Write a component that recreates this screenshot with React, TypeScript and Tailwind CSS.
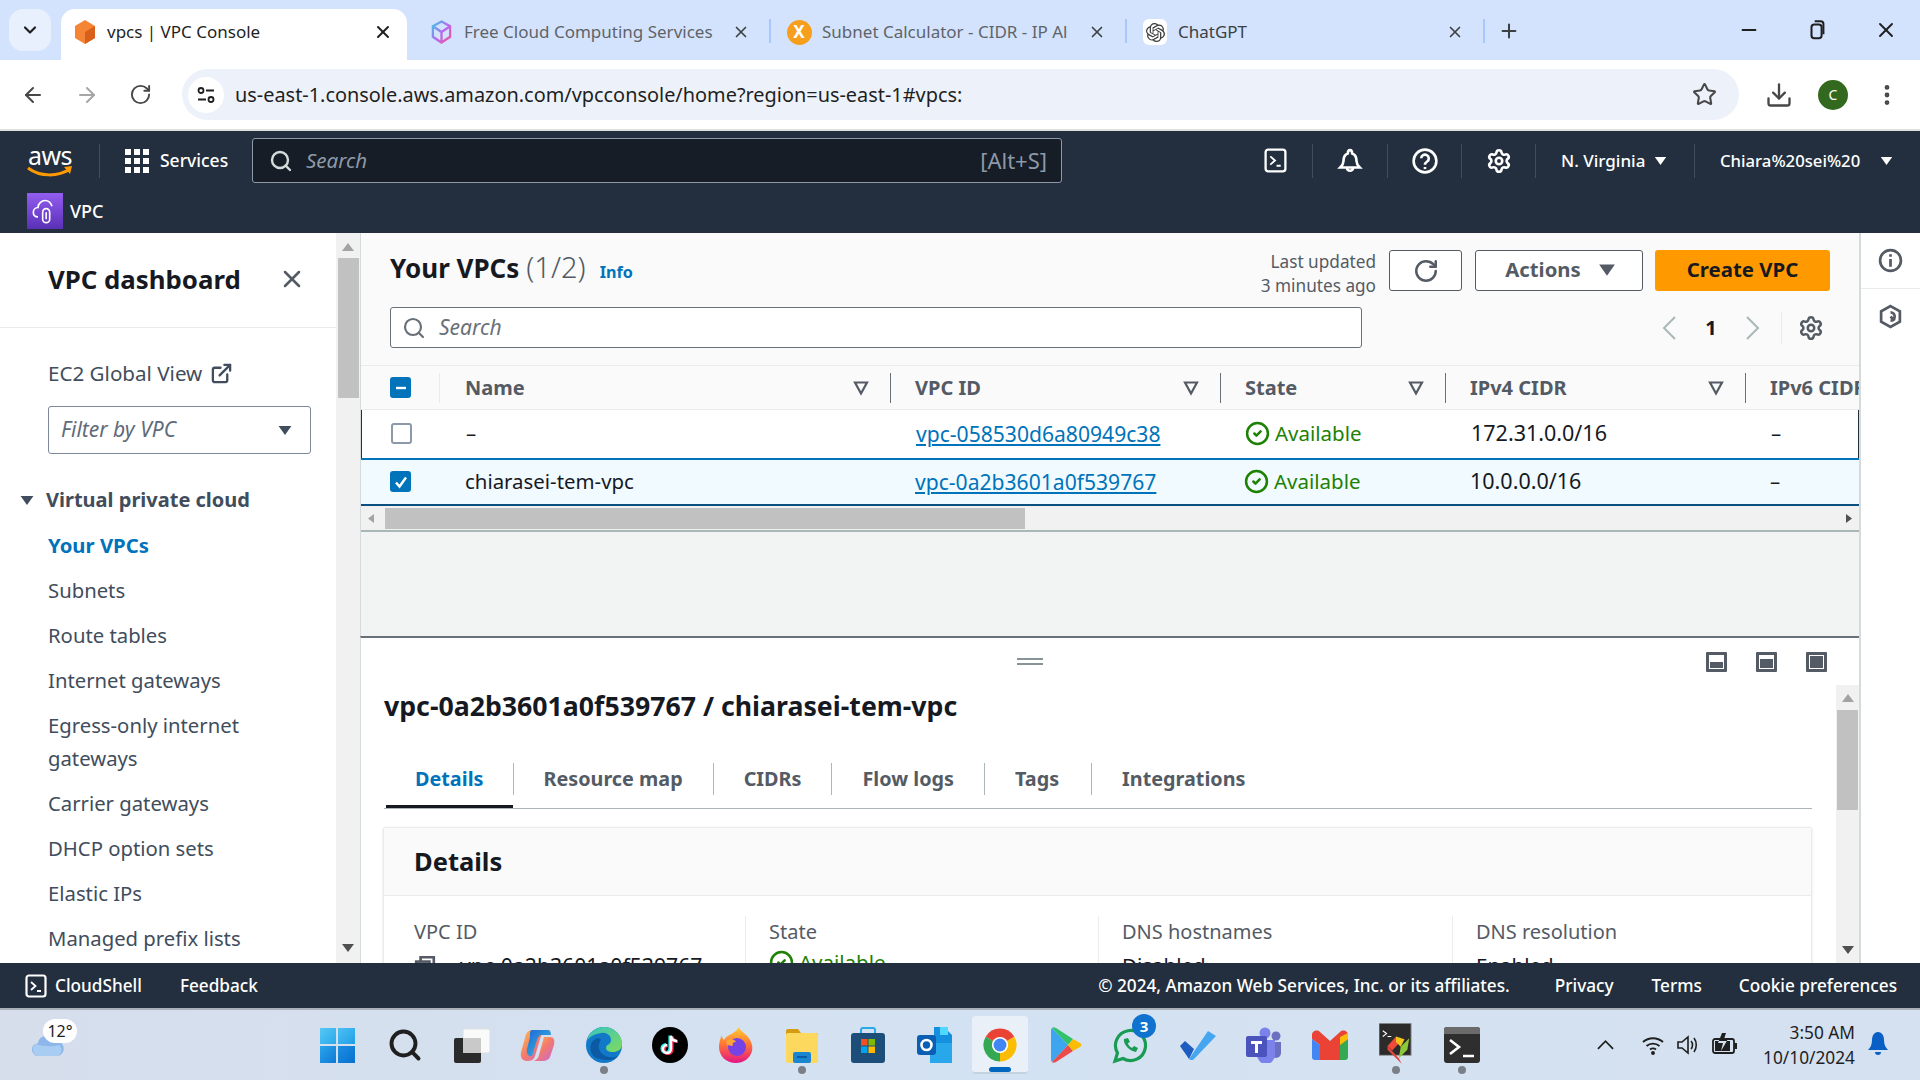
import {
  ArrowLeft,
  ArrowRight,
  ChevronDown,
  CircleCheck,
  Download,
  EllipsisVertical,
  ExternalLink,
  Minus,
  Plus,
  RotateCw,
  Search,
  Settings,
  Star,
  X,
} from 'lucide-react';
import { SiOpenai } from 'react-icons/si';

const nav = ['Subnets', 'Route tables', 'Internet gateways'];
const nav2 = ['Carrier gateways', 'DHCP option sets', 'Elastic IPs', 'Managed prefix lists'];

function Caret({ className }: { className?: string }) {
  return (
    <svg viewBox="0 0 16 12" className={className} fill="currentColor">
      <path d="M1 1h14L8 11z" />
    </svg>
  );
}

function FilterIcon() {
  return (
    <svg viewBox="0 0 16 16" className="w-4 h-4 text-[#545b64]" fill="none" stroke="currentColor" strokeWidth="2.2">
      <path d="M2 2.5h12L8 13.5z" />
    </svg>
  );
}

function BoxPrompt({ className }: { className?: string }) {
  return (
    <svg viewBox="0 0 24 24" className={className} fill="none" stroke="currentColor" strokeWidth="2.2">
      <rect x="2.5" y="1.5" width="19" height="21" rx="2.5" />
      <path d="M7 8l4.5 4L7 16M13 17h4" strokeWidth="1.8" />
    </svg>
  );
}

function Tab({ icon, title, width, fade }: { icon: React.ReactNode; title: string; width: string; fade?: boolean }) {
  return (
    <div className={`flex items-center h-[46px] shrink-0 ${width}`}>
      <span className="w-[26px] h-[26px] flex items-center justify-center shrink-0">{icon}</span>
      <span
        className={`ml-[10px] flex-1 overflow-hidden whitespace-nowrap text-[17px] ${fade ? 'text-[#5f6368]' : 'text-[#3c4043]'}`}
      >
        {title}
      </span>
      <X className="w-[18px] h-[18px] text-[#3c4043] mx-[5px] shrink-0" strokeWidth={2.2} />
    </div>
  );
}

function TabBar() {
  return (
    <div className="h-[60px] bg-[#d3e3fd] flex items-start pt-[9px] shrink-0">
      <div className="ml-[9px] w-[42px] h-[42px] rounded-[14px] bg-[#e8f0fe] flex items-center justify-center">
        <ChevronDown className="w-5 h-5 text-[#1f1f1f]" strokeWidth={2.6} />
      </div>
      <div className="ml-[10px] w-[346px] h-[51px] bg-white rounded-t-[14px] flex items-center pl-[12px] pr-[14px] pb-[5px]">
        <svg viewBox="0 0 24 26" className="w-[24px] h-[26px] shrink-0">
          <path d="M12 1l10 6v12l-10 6-10-6V7z" fill="#f58534" />
          <path d="M12 13l10-6v12l-10 6z" fill="#d9601a" />
        </svg>
        <span className="ml-[10px] flex-1 text-[17px] text-[#1f1f1f] whitespace-nowrap">vpcs | VPC Console</span>
        <X className="w-[20px] h-[20px] text-[#1f1f1f]" strokeWidth={2.4} />
      </div>
      <div className="ml-[21px] w-[327px]">
        <Tab
          width="w-[327px]"
          fade
          title="Free Cloud Computing Services"
          icon={
            <svg viewBox="0 0 24 26" className="w-[23px] h-[26px]" fill="none" strokeWidth="2.4">
              <defs>
                <linearGradient id="fc" x1="0" y1="0" x2="1" y2="1">
                  <stop offset="0" stopColor="#3fc7e8" />
                  <stop offset="0.5" stopColor="#b36cf0" />
                  <stop offset="1" stopColor="#f2559c" />
                </linearGradient>
              </defs>
              <path d="M12 2l9 5v11l-9 6-9-6V7zM3 7l9 6 9-6M12 13v11" stroke="url(#fc)" />
            </svg>
          }
        />
      </div>
      <div className="w-[2px] h-[24px] mt-[10px] ml-[14px] bg-[#a8c7fa] shrink-0" />
      <div className="ml-[15px] w-[325px]">
        <Tab
          width="w-[325px]"
          fade
          title="Subnet Calculator - CIDR - IP Al"
          icon={
            <span className="w-[25px] h-[25px] rounded-full bg-[#f79f1c] flex items-center justify-center text-white text-[17px] font-bold">
              X
            </span>
          }
        />
      </div>
      <div className="w-[2px] h-[24px] mt-[10px] ml-[14px] bg-[#a8c7fa] shrink-0" />
      <div className="ml-[15px] w-[327px]">
        <Tab
          width="w-[327px]"
          title="ChatGPT"
          icon={
            <span className="w-[24px] h-[26px] rounded-[6px] bg-white flex items-center justify-center">
              <SiOpenai className="w-[19px] h-[19px] text-[#3c3c3c]" />
            </span>
          }
        />
      </div>
      <div className="w-[2px] h-[24px] mt-[10px] ml-[14px] bg-[#a8c7fa] shrink-0" />
      <Plus className="ml-[13px] mt-[10px] w-[22px] h-[24px] text-[#3c4043]" strokeWidth={2.2} />
      <div className="ml-auto flex items-center h-[42px] pr-[22px] gap-[46px] text-[#1f1f1f]">
        <Minus className="w-[22px] h-[22px]" strokeWidth={2.2} />
        <svg viewBox="0 0 22 24" className="w-[22px] h-[22px]" fill="none" stroke="currentColor" strokeWidth="2.2">
          <rect x="5" y="6" width="11" height="15" rx="3" />
          <path d="M8.5 2.5H15a3 3 0 0 1 3 3v11" />
        </svg>
        <X className="w-[24px] h-[26px]" strokeWidth={1.9} />
      </div>
    </div>
  );
}

function AddressBar() {
  return (
    <div className="h-[71px] bg-white border-b-2 border-[#dfdfdf] flex items-center shrink-0">
      <div className="w-[182px] flex items-center pl-[21px] gap-[30px] text-[#474747]">
        <ArrowLeft className="w-[24px] h-[24px]" strokeWidth={2} />
        <ArrowRight className="w-[24px] h-[24px] text-[#a6a6a6]" strokeWidth={2} />
        <RotateCw className="w-[23px] h-[23px]" strokeWidth={2} />
      </div>
      <div className="w-[1557px] h-[51px] rounded-full bg-[#edf2fa] flex items-center pl-[6px] pr-[22px]">
        <span className="w-[36px] h-[36px] rounded-full bg-white flex items-center justify-center">
          <svg viewBox="0 0 20 20" className="w-[20px] h-[20px] text-[#1f1f1f]" fill="none" stroke="currentColor" strokeWidth="1.8">
            <circle cx="5" cy="5.500" r="2.500" />
            <path d="M10 5.500h8M2 14.500h8" />
            <circle cx="15" cy="14.500" r="2.500" />
          </svg>
        </span>
        <span className="ml-[11px] flex-1 text-[19.900px] text-[#1f1f1f] whitespace-nowrap">
          us-east-1.console.aws.amazon.com/vpcconsole/home?region=us-east-1#vpcs:
        </span>
        <Star className="w-[25px] h-[25px] text-[#474747]" strokeWidth={2} />
      </div>
      <Download className="ml-[26px] w-[28px] h-[28px] text-[#474747]" strokeWidth={2} />
      <span className="ml-[25px] w-[30px] h-[30px] rounded-full bg-[#33691e] text-white text-[14px] flex items-center justify-center">
        C
      </span>
      <EllipsisVertical className="ml-[26px] w-[26px] h-[26px] text-[#474747]" strokeWidth={2.4} />
    </div>
  );
}

function NavSep({ className }: { className: string }) {
  return <div className={`w-px h-[34px] bg-[#414d5c] shrink-0 ${className}`} />;
}

function AwsNav() {
  return (
    <div className="h-[102px] bg-[#232f3e] text-white shrink-0">
      <div className="h-[59px] flex items-center">
        <div className="ml-[27px] w-[46px] h-[36px] flex flex-col items-center">
          <span className="text-[25px] leading-[24px] tracking-tight">aws</span>
          <svg viewBox="0 0 46 12" className="w-[46px] h-[12px] -mt-[1px]" fill="none">
            <path d="M1 2c12 9 30 9 42 1" stroke="#ff9900" strokeWidth="3" />
            <path d="M37 1l8-1-2 8z" fill="#ff9900" />
          </svg>
        </div>
        <NavSep className="ml-[26px]" />
        <div className="ml-[25px] grid grid-cols-3 gap-[3px] w-[24px] shrink-0">
          {Array.from({ length: 9 }).map((_, i) => (
            <span key={i} className="w-[6px] h-[6px] bg-white" />
          ))}
        </div>
        <span className="ml-[11px] w-[92px] text-[17.500px] font-medium">Services</span>
        <div className="w-[810px] h-[45px] bg-[#161d26] border border-[#8d99a8] rounded-[3px] flex items-center pl-[16px] pr-[14px]">
          <Search className="w-[24px] h-[24px] text-[#d5dbdb]" strokeWidth={2.4} />
          <span className="ml-[13px] text-[20.500px] italic text-[#8d99a8] flex-1">Search</span>
          <span className="text-[22px] text-[#8d99a8]">[Alt+S]</span>
        </div>
        <BoxPrompt className="ml-[201px] w-[25px] h-[25px] shrink-0" />
        <NavSep className="ml-[24px]" />
        <svg
          viewBox="0 0 24 24"
          className="ml-[24px] w-[26px] h-[26px] shrink-0"
          fill="none"
          stroke="currentColor"
          strokeWidth="2.4"
        >
          <path d="M12 2c-1 0-2 1-2 3-3 1-4 4-4 7 0 3-2 5-3 6h18c-1-1-3-3-3-6 0-3-1-6-4-7 0-2-1-3-2-3zM9 18a3 3 0 0 0 6 0" />
        </svg>
        <NavSep className="ml-[24px]" />
        <svg
          viewBox="0 0 24 24"
          className="ml-[24px] w-[26px] h-[26px] shrink-0"
          fill="none"
          stroke="currentColor"
          strokeWidth="2.4"
        >
          <circle cx="12" cy="12" r="10.5" />
          <path d="M8.5 9.5a3.5 3.5 0 1 1 5.5 3c-1.3.9-2 1.4-2 3" />
          <path d="M12 17.5v2" />
        </svg>
        <NavSep className="ml-[23px]" />
        <Settings className="ml-[24px] w-[26px] h-[26px] shrink-0" strokeWidth={2.4} />
        <NavSep className="ml-[23px]" />
        <span className="ml-[25px] text-[17px] font-medium w-[90px] whitespace-nowrap">N. Virginia</span>
        <Caret className="ml-[3px] w-[13px] h-[10px]" />
        <NavSep className="ml-[27px]" />
        <span className="ml-[25px] text-[16.700px] font-medium w-[152px] whitespace-nowrap">Chiara%20sei%20</span>
        <Caret className="ml-[8px] w-[13px] h-[10px]" />
      </div>
      <div className="h-[43px] flex items-start">
        <div className="ml-[27px] mt-[3px] w-[36px] h-[36px] bg-gradient-to-b from-[#945df2] to-[#5a30b5] flex items-center justify-center">
          <svg viewBox="0 0 24 24" className="w-[28px] h-[28px]" fill="none" stroke="white" strokeWidth="1.4">
            <path d="M6 17c-3 0-4-2-4-4s1.500-4 4-4c0-3 3-6 6-6 3 0 5 2 6 5" />
            <rect x="10" y="10" width="6" height="12" rx="3" />
            <path d="M13 13v6" />
          </svg>
        </div>
        <span className="ml-[7px] mt-[8px] text-[18px] font-medium">VPC</span>
      </div>
    </div>
  );
}

function ScrollArrow({ up }: { up?: boolean }) {
  return (
    <svg viewBox="0 0 12 8" className={`w-[12px] h-[8px] ${up ? 'text-[#a3a3a3]' : 'text-[#505050]'}`} fill="currentColor">
      <path d={up ? 'M6 0l6 8H0z' : 'M6 8L0 0h12z'} />
    </svg>
  );
}

function Sidebar() {
  return (
    <div className="w-[360px] flex shrink-0 h-full">
      <div className="w-[336px] bg-white overflow-hidden text-[#414d5c] text-[20.300px]">
        <div className="h-[95px] border-b border-[#e9ebed] flex items-center pl-[48px] pr-[30px] pb-[2px]">
          <span className="flex-1 text-[25.800px] font-bold text-[#16191f] whitespace-nowrap">VPC dashboard</span>
          <X className="w-[28px] h-[28px] text-[#545b64]" strokeWidth={2.2} />
        </div>
        <div className="pl-[48px] mt-[31px] flex items-center h-[28px] text-[20.600px]">
          <span>EC2 Global View</span>
          <ExternalLink className="ml-[8px] w-[23px] h-[23px] text-[#414d5c]" strokeWidth={2.4} />
        </div>
        <div className="ml-[48px] mt-[19px] w-[263px] h-[48px] border border-[#7d8998] rounded-[3px] flex items-center pl-[12px] pr-[17px] italic text-[21px] text-[#5f6b7a]">
          <span className="flex-1">Filter by VPC</span>
          <Caret className="w-[16px] h-[11px] text-[#414d5c]" />
        </div>
        <div className="mt-[31px] pl-[19px] flex items-center h-[30px] font-bold text-[20px]">
          <Caret className="w-[16px] h-[11px]" />
          <span className="ml-[11px] whitespace-nowrap">Virtual private cloud</span>
        </div>
        <div className="pl-[48px]">
          <div className="h-[45px] mt-[8px] flex items-center font-bold text-[#0073bb]">Your VPCs</div>
          {nav.map((item) => (
            <div key={item} className="h-[45px] flex items-center whitespace-nowrap">
              {item}
            </div>
          ))}
          <div className="leading-[33px] py-[6px] w-[250px]">Egress-only internet gateways</div>
          {nav2.map((item) => (
            <div key={item} className="h-[45px] flex items-center whitespace-nowrap">
              {item}
            </div>
          ))}
        </div>
      </div>
      <div className="w-[24px] bg-[#f1f1f1] flex flex-col items-center pt-[10px] pb-[11px]">
        <ScrollArrow up />
        <div className="w-[21px] h-[140px] mt-[7px] bg-[#c1c1c1]" />
        <div className="flex-1" />
        <ScrollArrow />
      </div>
    </div>
  );
}

function Checkbox({ state }: { state: 'none' | 'some' | 'all' }) {
  if (state === 'none') {
    return <span className="block w-[21px] h-[21px] rounded-[3px] border-2 border-[#8d99a8] bg-white" />;
  }
  return (
    <span className="w-[21px] h-[21px] rounded-[3px] bg-[#0073bb] flex items-center justify-center">
      <svg viewBox="0 0 16 16" className="w-[16px] h-[16px]" fill="none" stroke="white" strokeWidth="2.4">
        <path d={state === 'some' ? 'M3 8h10' : 'M3 8.500l3.500 4L13 3.500'} />
      </svg>
    </span>
  );
}

const gridCols = 'grid grid-cols-[79px_450px_330px_225px_300px_200px]';

function HeadCell({ label, sep = true }: { label: string; sep?: boolean }) {
  return (
    <div className="flex items-center h-[30px] pl-[24px] pr-[21px] border-l border-[#687078]">
      <span className="flex-1 text-[20px] font-bold text-[#545b64] whitespace-nowrap">{label}</span>
      {sep && <FilterIcon />}
    </div>
  );
}

function Available({ small }: { small?: boolean }) {
  return (
    <div className={`flex items-center text-[#1d8102] text-[20.500px] ${small ? 'h-[24px]' : ''}`}>
      <CircleCheck className="w-[25px] h-[25px] mr-[5px]" strokeWidth={2.4} />
      Available
    </div>
  );
}

function VpcRow({
  name,
  id,
  cidr,
  selected,
}: {
  name: string;
  id: string;
  cidr: string;
  selected?: boolean;
}) {
  return (
    <div
      className={`${gridCols} items-center text-[20.400px] text-[#16191f] pb-[1px] ${
        selected
          ? 'h-[48px] bg-[#f1faff] border-y-2 border-[#0073bb] border-b-[#0b4f80]'
          : 'h-[48px] bg-white border-x border-[#232f3e]'
      }`}
    >
      <div className="pl-[29px]">
        <Checkbox state={selected ? 'all' : 'none'} />
      </div>
      <div className="pl-[25px] whitespace-nowrap">{name}</div>
      <div className="pl-[25px] text-[21.100px] text-[#0073bb] underline underline-offset-2 whitespace-nowrap">{id}</div>
      <div className="pl-[24px]">
        <Available />
      </div>
      <div className="pl-[25px] text-[21.500px]">{cidr}</div>
      <div className="pl-[25px]">–</div>
    </div>
  );
}

function VpcList() {
  return (
    <div className="h-[403px] bg-[#f2f3f3] shrink-0 border-l border-[#d5dbdb] overflow-hidden">
      <div className="h-[132px] bg-[#fafafa] px-[29px] pt-[17px]">
        <div className="flex items-start h-[41px]">
          <div className="flex items-baseline -mt-[5px]">
            <span className="text-[26px] font-bold text-[#16191f]">Your VPCs</span>
            <span className="ml-[7px] text-[29px] font-light text-[#545b64]">(1/2)</span>
            <span className="ml-[14px] text-[16.200px] font-bold text-[#0073bb]">Info</span>
          </div>
          <div className="ml-auto text-right text-[#545b64] text-[17.200px] leading-[24px]">
            <div>Last updated</div>
            <div>3 minutes ago</div>
          </div>
          <div className="ml-[13px] w-[73px] h-[41px] bg-white border border-[#545b64] rounded-[3px] flex items-center justify-center">
            <RotateCw className="w-[26px] h-[26px] text-[#545b64]" strokeWidth={2.3} />
          </div>
          <div className="ml-[13px] w-[168px] h-[41px] bg-white border border-[#545b64] rounded-[3px] flex items-center justify-center gap-[17px] pl-[3px] pb-[2px] text-[#545b64] text-[20.300px] font-bold">
            Actions
            <Caret className="w-[18px] h-[14px]" />
          </div>
          <div className="ml-[12px] w-[175px] h-[41px] bg-[#ff9900] rounded-[3px] flex items-center justify-center pb-[2px] text-[#16191f] text-[20.400px] font-bold">
            Create VPC
          </div>
        </div>
        <div className="mt-[16px] flex items-center h-[41px]">
          <div className="w-[972px] h-[41px] bg-white border border-[#687078] rounded-[3px] flex items-center pl-[11px] italic text-[#687078] text-[21px] shrink-0">
            <Search className="w-[24px] h-[24px] mr-[13px]" strokeWidth={2.2} />
            Search
          </div>
          <svg viewBox="0 0 14 24" className="ml-[300px] w-[14px] h-[24px] text-[#aab7b8] shrink-0" fill="none" stroke="currentColor" strokeWidth="2">
            <path d="M13 1L2 12l11 11" />
          </svg>
          <span className="ml-[28px] w-[14px] text-[20px] font-bold text-[#16191f] text-center">1</span>
          <svg viewBox="0 0 14 24" className="ml-[28px] w-[14px] h-[24px] text-[#aab7b8] shrink-0" fill="none" stroke="currentColor" strokeWidth="2">
            <path d="M1 1l11 11L1 23" />
          </svg>
          <div className="ml-[21px] w-px h-[32px] bg-[#eaeded]" />
          <Settings className="ml-[16px] w-[26px] h-[26px] text-[#545b64]" strokeWidth={2.3} />
        </div>
      </div>
      <div className={`${gridCols} items-center h-[45px] bg-[#fafafa] border-y border-[#e9ebed]`}>
        <div className="flex items-center h-[30px] pl-[29px]">
          <Checkbox state="some" />
          <div className="ml-[28px] w-px h-[30px] bg-[#e9ebed]" />
        </div>
        <div className="flex items-center h-[30px] pl-[25px] pr-[21px]">
          <span className="flex-1 text-[20px] font-bold text-[#545b64]">Name</span>
          <FilterIcon />
        </div>
        <HeadCell label="VPC ID" />
        <HeadCell label="State" />
        <HeadCell label="IPv4 CIDR" />
        <HeadCell label="IPv6 CIDR" sep={false} />
      </div>
      <VpcRow name="–" id="vpc-058530d6a80949c38" cidr="172.31.0.0/16" />
      <VpcRow name="chiarasei-tem-vpc" id="vpc-0a2b3601a0f539767" cidr="10.0.0.0/16" selected />
      <div className="h-[26px] bg-[#f1f1f1] border-b-2 border-[#aab7b8] flex items-center pl-[7px] pr-[7px]">
        <svg viewBox="0 0 8 12" className="w-[6px] h-[11px] text-[#a3a3a3]" fill="currentColor">
          <path d="M0 6l8-6v12z" />
        </svg>
        <div className="ml-[11px] w-[640px] h-[21px] bg-[#c1c1c1]" />
        <svg viewBox="0 0 8 12" className="ml-auto w-[6px] h-[11px] text-[#505050]" fill="currentColor">
          <path d="M8 6L0 0v12z" />
        </svg>
      </div>
    </div>
  );
}

function PanelIcon({ fill }: { fill: string }) {
  return (
    <span className="w-[21px] h-[20px] border-[3px] border-[#545b64] rounded-[1px] flex items-end p-[1px]">
      <span className={`block w-full bg-[#545b64] ${fill}`} />
    </span>
  );
}

const tabs = ['Resource map', 'CIDRs', 'Flow logs', 'Tags', 'Integrations'];

function TabLabel({ label, active }: { label: string; active?: boolean }) {
  return (
    <div className={`h-[45px] ${active ? 'ml-[2px] border-b-[3px] border-[#16191f]' : ''}`}>
      <div
        className={`h-[32px] flex items-center text-[19.800px] font-bold whitespace-nowrap ${
          active
            ? 'pl-[29px] pr-[30px] text-[#0073bb] border-r border-[#aab7b8] -mr-px'
            : 'px-[30px] text-[#545b64] border-r border-[#aab7b8]'
        } ${label === 'Integrations' ? 'border-r-0' : ''} ${label === 'Tags' ? 'pr-[32px]' : ''}`}
      >
        {label}
      </div>
    </div>
  );
}

function DetailCol({
  label,
  sep,
  pad,
  children,
}: {
  label: string;
  sep?: boolean;
  pad: string;
  children: React.ReactNode;
}) {
  return (
    <div className={`h-[60px] ${pad} ${sep ? 'border-l border-[#eaeded]' : ''}`}>
      <div className="h-[32px] flex items-center text-[20px] text-[#545b64] whitespace-nowrap">{label}</div>
      <div className="mt-[2px] text-[20.500px] text-[#16191f]">{children}</div>
    </div>
  );
}

function SplitPanel() {
  return (
    <div className="flex-1 min-h-0 bg-white border-l border-t-2 border-t-[#687078] border-l-[#d5dbdb] flex flex-col">
      <div className="h-[47px] flex items-center shrink-0 pr-[32px]">
        <div className="ml-[656px] w-[26px] h-[7px] border-y-2 border-[#879596]" />
        <div className="ml-auto flex gap-[29px]">
          <PanelIcon fill="h-[6px]" />
          <PanelIcon fill="h-[9px]" />
          <PanelIcon fill="h-[12px]" />
        </div>
      </div>
      <div className="flex-1 min-h-0 flex">
        <div className="flex-1 overflow-hidden pl-[23px] pr-[24px]">
          <h2 className="mt-[5px] h-[32px] leading-[32px] text-[26.700px] font-bold text-[#16191f] whitespace-nowrap">
            vpc-0a2b3601a0f539767 / chiarasei-tem-vpc
          </h2>
          <div className="mt-[41px] flex border-b-[1px] border-[#aab7b8] h-[46px]">
            <TabLabel label="Details" active />
            {tabs.map((t) => (
              <TabLabel key={t} label={t} />
            ))}
          </div>
          <div className="mt-[18px] -ml-px border border-[#e9ebed] rounded-t-[2px] shadow-sm">
            <div className="h-[68px] bg-[#fafafa] border-b border-[#e9ebed] flex items-center pl-[30px] text-[25.500px] font-bold text-[#16191f]">
              Details
            </div>
            <div className="grid grid-cols-[361px_353px_354px_1fr] pt-[20px] h-[100px]">
              <DetailCol label="VPC ID" pad="pl-[30px]">
                <div className="flex items-center text-[21.200px]">
                  <svg viewBox="0 0 20 20" className="w-[22px] h-[22px] text-[#545b64] mr-[24px] shrink-0" fill="none" stroke="currentColor" strokeWidth="2.4">
                    <rect x="2" y="6" width="12" height="12" />
                    <path d="M6 6V2h12v12h-4" />
                  </svg>
                  vpc-0a2b3601a0f539767
                </div>
              </DetailCol>
              <DetailCol label="State" sep pad="pl-[23px]">
                <Available small />
              </DetailCol>
              <DetailCol label="DNS hostnames" sep pad="pl-[23px]">
                Disabled
              </DetailCol>
              <DetailCol label="DNS resolution" sep pad="pl-[23px]">
                Enabled
              </DetailCol>
            </div>
          </div>
        </div>
        <div className="w-[23px] bg-[#f1f1f1] flex flex-col items-center pt-[9px] pb-[9px] shrink-0">
          <ScrollArrow up />
          <div className="w-[21px] h-[100px] mt-[8px] bg-[#c1c1c1]" />
          <div className="flex-1" />
          <ScrollArrow />
        </div>
      </div>
    </div>
  );
}

function ToolsRail() {
  return (
    <div className="flex-1 bg-white border-l border-[#d5dbdb] text-[#545b64]">
      <div className="h-[56px] border-b border-[#e9ebed] flex items-center justify-center">
        <svg viewBox="0 0 24 24" className="w-[25px] h-[25px]" fill="none" stroke="currentColor" strokeWidth="2.6">
          <circle cx="12" cy="12" r="10" />
          <path d="M12 10.500V18M12 6v2.500" />
        </svg>
      </div>
      <div className="mt-[15px] flex justify-center">
        <svg viewBox="0 0 24 24" className="w-[25px] h-[25px]" fill="none" stroke="currentColor" strokeWidth="2.6">
          <path d="M12 2l9 5v10l-9 5-9-5V7z" />
          <path d="M12 8a4 4 0 0 1 0 8M12 12l4 4" />
        </svg>
      </div>
    </div>
  );
}

function Footer() {
  return (
    <div className="h-[45px] bg-[#232f3e] text-white text-[17.200px] font-medium flex items-center shrink-0">
      <BoxPrompt className="ml-[24px] w-[24px] h-[24px]" />
      <span className="ml-[7px]">CloudShell</span>
      <span className="ml-[38px]">Feedback</span>
      <span className="ml-auto">© 2024, Amazon Web Services, Inc. or its affiliates.</span>
      <span className="ml-[45px]">Privacy</span>
      <span className="ml-[38px]">Terms</span>
      <span className="ml-[37px] mr-[23px]">Cookie preferences</span>
    </div>
  );
}

function Slot({ children, dot, className }: { children: React.ReactNode; dot?: boolean; className?: string }) {
  return (
    <div className={`w-[66px] h-[70px] flex flex-col items-center justify-center shrink-0 relative ${className ?? ''}`}>
      {children}
      {dot && <span className="absolute bottom-[6px] w-[8px] h-[8px] rounded-full bg-[#7b8088]" />}
    </div>
  );
}

function Taskbar() {
  return (
    <div className="h-[72px] shrink-0 border-t-2 border-[#a9b0b8] bg-gradient-to-r from-[#d6deec] via-[#d3e2f2] to-[#d5e1f1] flex items-center">
      <div className="ml-[30px] w-[47px] h-[54px] relative shrink-0">
        <svg viewBox="0 0 36 26" className="absolute left-0 bottom-[15px] w-[36px] h-[24px]">
          <path d="M8 25a7 7 0 0 1-1-14 10 10 0 0 1 19-2 8 8 0 0 1 2 16z" fill="#8db7ea" />
          <path d="M8 25a7 7 0 0 1-3-13c8 3 18 3 25 1a7 7 0 0 1-2 12z" fill="#a9cdf2" />
        </svg>
        <span className="absolute left-[13px] top-[1px] w-[34px] h-[24px] rounded-full bg-white text-[16px] text-[#1f1f1f] flex items-center justify-center">
          12°
        </span>
      </div>
      <div className="ml-[227px] flex items-center">
        <Slot>
          <div className="grid grid-cols-2 gap-[2px] w-[35px] h-[35px]">
            <span className="bg-gradient-to-br from-[#55c8f5] to-[#28a8ea]" />
            <span className="bg-gradient-to-br from-[#4bc0f3] to-[#1f9fe6]" />
            <span className="bg-gradient-to-br from-[#2aa5ec] to-[#0f78d4]" />
            <span className="bg-gradient-to-br from-[#1b90e3] to-[#0a6fce]" />
          </div>
        </Slot>
        <Slot className="ml-[2px]">
          <Search className="w-[36px] h-[36px] text-[#1f1f1f]" strokeWidth={2.6} />
        </Slot>
        <Slot className="ml-[1px]">
          <svg viewBox="0 0 36 36" className="w-[36px] h-[36px]">
            <rect x="9" y="2" width="27" height="24" rx="2" fill="#fafafa" stroke="#dedede" />
            <rect x="0" y="11" width="27" height="25" rx="2" fill="#2b2b2b" />
            <rect x="9" y="11" width="18" height="15" fill="#c9c9c9" />
          </svg>
        </Slot>
        <Slot>
          <svg viewBox="0 0 36 36" className="w-[36px] h-[36px]">
            <defs>
              <linearGradient id="cpa" x1="0" y1="0" x2="1" y2="1">
                <stop offset="0" stopColor="#1e66d8" />
                <stop offset="1" stopColor="#3fc3d9" />
              </linearGradient>
              <linearGradient id="cpb" x1="0" y1="0" x2="1" y2="1">
                <stop offset="0" stopColor="#f7c14a" />
                <stop offset="0.5" stopColor="#f4796c" />
                <stop offset="1" stopColor="#c36ae0" />
              </linearGradient>
            </defs>
            <path d="M12 3h15c-3 0-5 2-6 6l-6 20c-1 4-4 5-8 5-5 0-7-4-6-9l4-14c1-5 3-8 7-8z" fill="url(#cpb)" />
            <path d="M12 3h16c2 0 3 2 3 5l-9 0c-3 0-4 2-5 5l-5 16c-4 1-6-3-5-7l3-12c0-4 0-7 2-7z" fill="url(#cpa)" />
            <path d="M24 10h6c4 0 5 3 4 8l-3 9c-1 5-4 7-8 7H12c3 0 6-2 7-6z" fill="url(#cpb)" />
          </svg>
        </Slot>
        <Slot dot>
          <svg viewBox="0 0 36 36" className="w-[36px] h-[36px]">
            <defs>
              <linearGradient id="eda" x1="0" y1="0" x2="1" y2="1">
                <stop offset="0" stopColor="#36c5c0" />
                <stop offset="1" stopColor="#7fdb5c" />
              </linearGradient>
            </defs>
            <circle cx="18" cy="18" r="18" fill="#1278c8" />
            <path d="M1 14C3 5 10 0 18 0c10 0 18 8 18 17 0 6-5 8-9 8-5 0-7-2-7-4 0-4 5-3 5-8 0-5-5-8-10-7C9 7 4 9 1 14z" fill="url(#eda)" />
            <path d="M14 32c-8-1-11-8-9-15 2-5 8-8 10-4-4 5-3 15 8 17 4 1 7 0 9-1-3 4-10 5-18 3z" fill="#0c59a4" />
          </svg>
        </Slot>
        <Slot>
          <div className="w-[36px] h-[36px] rounded-full bg-black flex items-center justify-center">
            <svg viewBox="0 0 24 24" className="w-[24px] h-[24px]" fill="none" strokeWidth="3.2">
              <path d="M13 3v13a4 4 0 1 1-4-4M13 3c.5 3 2.500 5 6 5" stroke="#25f4ee" transform="translate(-1 -0.500)" />
              <path d="M13 3v13a4 4 0 1 1-4-4M13 3c.5 3 2.500 5 6 5" stroke="#fe2c55" transform="translate(1 0.500)" />
              <path d="M13 3v13a4 4 0 1 1-4-4M13 3c.5 3 2.500 5 6 5" stroke="white" strokeWidth="2.4" />
            </svg>
          </div>
        </Slot>
        <Slot>
          <svg viewBox="0 0 36 36" className="w-[36px] h-[36px]">
            <defs>
              <linearGradient id="ffa" x1="0.5" y1="0" x2="0.5" y2="1">
                <stop offset="0" stopColor="#ffd02e" />
                <stop offset="0.5" stopColor="#ff7139" />
                <stop offset="1" stopColor="#e31587" />
              </linearGradient>
            </defs>
            <path d="M21 0c1 4 6 6 9 10 4 5 5 10 4 14-2 8-9 12-16 12C8 36 1 29 1 20c0-4 1-8 3-12 0 3 1 4 2 5 2-4 6-5 9-7 3-2 5-4 6-6z" fill="url(#ffa)" />
            <circle cx="19" cy="20" r="9" fill="#7542e5" />
            <path d="M8 14c4-3 9-2 10 1-3 0-4 2-3 4l-6-1z" fill="#ffa436" />
          </svg>
        </Slot>
        <Slot dot>
          <svg viewBox="0 0 36 36" className="w-[36px] h-[36px]">
            <path d="M4 2h10l3 4h15a2 2 0 0 1 2 2v4H2V4a2 2 0 0 1 2-2z" fill="#d79b11" />
            <rect x="2" y="6" width="32" height="30" rx="2" fill="#fcd95e" />
            <rect x="9" y="25" width="18" height="11" rx="2" fill="#1a86d1" />
            <rect x="13" y="29" width="10" height="2" fill="#0a5da3" />
          </svg>
        </Slot>
        <Slot>
          <svg viewBox="0 0 36 36" className="w-[36px] h-[36px]">
            <path d="M11 6V3a2 2 0 0 1 2-2h10a2 2 0 0 1 2 2v3" fill="none" stroke="#29a8ea" strokeWidth="2" />
            <rect x="1" y="6" width="34" height="30" rx="3" fill="#1d4e79" />
            <rect x="11" y="12" width="6.500" height="6.500" fill="#f25022" />
            <rect x="18.500" y="12" width="6.500" height="6.500" fill="#7fba00" />
            <rect x="11" y="19.500" width="6.500" height="6.500" fill="#00a4ef" />
            <rect x="18.500" y="19.500" width="6.500" height="6.500" fill="#ffb900" />
          </svg>
        </Slot>
        <Slot>
          <svg viewBox="0 0 36 36" className="w-[36px] h-[36px]">
            <path d="M18 0h10l8 8v24H18z" fill="#1490df" />
            <path d="M14 16l22 0v20H14z" fill="#28a8ea" />
            <path d="M24 0h8v8h-8z" fill="#50d9ff" />
            <rect x="1" y="8" width="19" height="20" rx="3" fill="#0a5fb4" />
            <circle cx="10.500" cy="18" r="5" fill="none" stroke="white" strokeWidth="2.600" />
          </svg>
        </Slot>
        <Slot>
          <div className="w-[56px] h-[58px] rounded-[4px] bg-[#e9f0f8] border-b-2 border-[#c5d2e0] flex flex-col items-center pt-[11px] relative">
            <svg viewBox="0 0 24 24" className="w-[36px] h-[36px]">
              <path d="M12 12L21.53 6.500A11 11 0 0 0 2.470 6.500Z" fill="#ea4335" />
              <path d="M12 12L2.470 6.500A11 11 0 0 0 12 23Z" fill="#34a853" />
              <path d="M12 12L12 23A11 11 0 0 0 21.530 6.500Z" fill="#fbbc04" />
              <circle cx="12" cy="12" r="5.400" fill="white" />
              <circle cx="12" cy="12" r="4.300" fill="#4285f4" />
            </svg>
            <span className="absolute bottom-[0px] w-[22px] h-[5px] rounded-full bg-[#0067c0]" />
          </div>
        </Slot>
        <Slot>
          <svg viewBox="0 0 32 36" className="w-[32px] h-[36px]">
            <path d="M2 1l16 17L2 35a3 3 0 0 1-1-2V3a3 3 0 0 1 1-2z" fill="#3ea6ee" />
            <path d="M2 1c1-1 2-1 4 0l17 11-5 6z" fill="#30c36b" />
            <path d="M2 35c1 1 2 1 4 0l17-11-5-6z" fill="#ec4b4b" />
            <path d="M23 12l7 4c2 1 2 3 0 4l-7 4-5-6z" fill="#fbbc04" />
          </svg>
        </Slot>
        <Slot>
          <div className="relative w-[40px] h-[40px]">
            <svg viewBox="0 0 36 36" className="w-[36px] h-[38px] mt-[2px]" fill="none" stroke="#199b53" strokeWidth="3.200">
              <path d="M3 33l2.500-8A15 15 0 1 1 11 30.500z" />
              <path d="M12 11c-1 5 5 12 12 13l2-4-4-2-2 2c-2-1-4-3-4-5l2-1-2-4z" fill="#199b53" stroke="none" />
            </svg>
            <span className="absolute -top-[11px] left-[20px] w-[24px] h-[24px] rounded-full bg-[#0f72cf] text-white text-[15px] font-bold flex items-center justify-center">
              3
            </span>
          </div>
        </Slot>
        <Slot>
          <svg viewBox="0 0 36 30" className="w-[36px] h-[30px]">
            <path d="M0 16l5-5 9 8-5 10z" fill="#1e5cbf" />
            <path d="M9 29L28 1l8 5-21 22c-3 3-4 3-6 1z" fill="#45a5f0" />
          </svg>
        </Slot>
        <Slot>
          <svg viewBox="0 0 36 36" className="w-[36px] h-[36px]">
            <circle cx="30" cy="9" r="4.500" fill="#6c70c0" />
            <path d="M25 15h10v11a5 5 0 0 1-10 0z" fill="#6c70c0" />
            <circle cx="19" cy="6" r="5.500" fill="#7b83eb" />
            <path d="M11 13h18v15a9 9 0 0 1-18 0z" fill="#7b83eb" />
            <rect x="0" y="9" width="21" height="21" rx="2" fill="#4b53bc" />
            <path d="M5 14h11v3h-4v9H9v-9H5z" fill="white" />
          </svg>
        </Slot>
        <Slot>
          <svg viewBox="0 0 36 30" className="w-[36px] h-[30px]">
            <path d="M0 5c0-4 5-6 8-3l10 9 10-9c3-3 8-1 8 3v4l-8 6V30H8V15l-8-6z" fill="#ea4335" />
            <path d="M0 9l8 6v15H3a3 3 0 0 1-3-3z" fill="#4285f4" />
            <path d="M36 9l-8 6v15h5a3 3 0 0 0 3-3z" fill="#34a853" />
            <path d="M28 7l8-4v6l-8 6z" fill="#fbbc04" />
          </svg>
        </Slot>
        <Slot dot>
          <svg viewBox="0 0 36 44" className="w-[34px] h-[42px] mt-[-2px]">
            <rect x="0" y="0" width="34" height="34" fill="#2b2b2b" stroke="#9c9c9c" />
            <path d="M4 8l4 3-4 3M9 14h4" stroke="white" strokeWidth="1.200" fill="none" />
            <path d="M9 24l9-10 5 5-9 10z" fill="#ef4a3a" />
            <path d="M18 14l9 3-4 8-5-5z" fill="#f0c419" />
            <path d="M23 25l9-9-2 12-9 9z" fill="#8cc83c" />
            <path d="M9 24l12 13 3 6-15-15z" fill="#e4473d" />
          </svg>
        </Slot>
        <Slot dot>
          <div className="w-[36px] h-[36px] rounded-[3px] bg-[#2e2e2e] flex flex-col overflow-hidden">
            <span className="h-[7px] bg-[#6b6b6b] block" />
            <svg viewBox="0 0 36 29" className="w-[36px] h-[29px]" fill="none" stroke="white" strokeWidth="2.600">
              <path d="M6 6l9 7-9 7M19 22h11" />
            </svg>
          </div>
        </Slot>
      </div>
      <div className="ml-auto flex items-center h-full text-[#1f1f1f]">
        <svg viewBox="0 0 18 10" className="w-[17px] h-[10px]" fill="none" stroke="currentColor" strokeWidth="1.800">
          <path d="M1 9l8-8 8 8" />
        </svg>
        <svg viewBox="0 0 24 24" className="ml-[27px] w-[24px] h-[24px]" fill="none" stroke="currentColor" strokeWidth="1.900">
          <path d="M2 9a15 15 0 0 1 20 0M5.500 13a10 10 0 0 1 13 0M9 16.500a5 5 0 0 1 6 0" />
          <circle cx="12" cy="20" r="1" fill="currentColor" />
        </svg>
        <svg viewBox="0 0 24 24" className="ml-[10px] w-[24px] h-[24px]" fill="none" stroke="currentColor" strokeWidth="1.600">
          <path d="M3 9v6h4l6 5V4L7 9zM16 8c2 2 2 6 0 8M19 5c3 4 3 10 0 14" />
        </svg>
        <svg viewBox="0 0 26 24" className="ml-[13px] w-[26px] h-[24px]" fill="currentColor">
          <rect x="1" y="6" width="21" height="14" rx="2" fill="none" stroke="currentColor" strokeWidth="1.800" />
          <rect x="22.500" y="10" width="2.500" height="6" />
          <path d="M3 8h15v10H3zM10 0L6 10h5l-2 8 7-12h-4l2-6z" />
        </svg>
        <div className="ml-[22px] w-[95px] text-right text-[17.300px] leading-[25px] whitespace-nowrap">
          <div>3:50 AM</div>
          <div>10/10/2024</div>
        </div>
        <svg viewBox="0 0 20 26" className="ml-[13px] mr-[32px] w-[20px] h-[26px]" fill="#0a5fc4">
          <path d="M10 0c-4 0-6 4-6 8 0 5-2 8-4 10h20c-2-2-4-5-4-10 0-4-2-8-6-8zM7 20a3 3 0 0 0 6 0z" />
        </svg>
      </div>
    </div>
  );
}

export default function App() {
  return (
    <div className="w-[1920px] h-[1080px] flex flex-col overflow-hidden font-['Noto_Sans','Open_Sans',sans-serif] bg-white">
      <TabBar />
      <AddressBar />
      <AwsNav />
      <div className="flex-1 min-h-0 flex">
        <Sidebar />
        <div className="w-[1500px] flex flex-col shrink-0 border-r border-[#d5dbdb]">
          <VpcList />
          <SplitPanel />
        </div>
        <ToolsRail />
      </div>
      <Footer />
      <Taskbar />
    </div>
  );
}
